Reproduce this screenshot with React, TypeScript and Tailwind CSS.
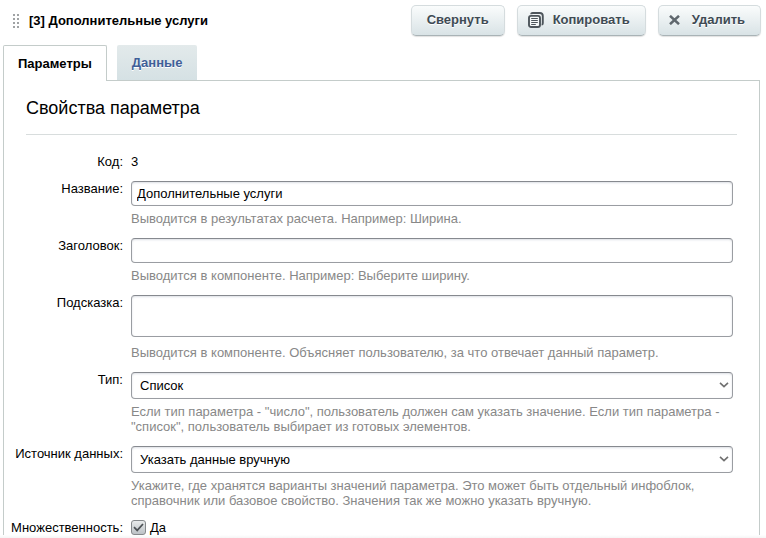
import { ReactNode, useState } from 'react';

const buttonClass =
  'flex h-[31px] cursor-pointer items-center rounded-[5px] border border-[#d5dcde] border-b-[#a9b3b6] bg-linear-to-b from-[#fafcfc] to-[#d9e3e6] pb-[2px] text-[13px] font-bold text-[#3f4b54] shadow-[0_1px_1px_rgba(0,0,0,0.12)] [text-shadow:0_1px_0_#fff]';

const fieldClass =
  'block w-full rounded-[4px] border border-[#9a9da2] border-t-[#86898f] bg-white text-[13px] text-black shadow-[inset_0_1px_2px_rgba(120,130,150,0.25)] outline-none focus:border-[#5b8fb5]';

function DragHandle() {
  return (
    <svg width="8" height="14" viewBox="0 0 8 14" fill="#a0a3a5" aria-hidden="true">
      {[0, 4, 8, 12].map((y) => (
        <g key={y}>
          <rect x="1" y={y} width="2" height="2" />
          <rect x="5" y={y} width="2" height="2" />
        </g>
      ))}
    </svg>
  );
}

function CopyIcon() {
  return (
    <svg width="16" height="16" viewBox="0 0 16 16" fill="none" aria-hidden="true">
      <path d="M3.2 2.2Q3.2 1 4.6 1H11.8Q14.8 1 14.8 4V11.2Q14.8 12.6 13.6 12.6" stroke="#4d555b" strokeWidth="1.9" />
      <rect x="1" y="3.9" width="11" height="11.1" rx="2" fill="#f4f8f8" stroke="#4d555b" strokeWidth="1.9" />
      <path d="M3.2 6.5H9.8M3.2 8.5H9.8M3.2 10.5H9.8M3.2 12.5H7.8" stroke="#4d555b" />
    </svg>
  );
}

function CrossIcon() {
  return (
    <svg width="11" height="10" viewBox="0 0 11 10" fill="none" aria-hidden="true">
      <path d="M1 0.8L10 9.2M10 0.8L1 9.2" stroke="#5f676d" strokeWidth="2.5" />
    </svg>
  );
}

type RowProps = {
  label: string;
  htmlFor?: string;
  hint?: string;
  hintClass?: string;
  children: ReactNode;
};

function Row({ label, htmlFor, hint, hintClass = 'mt-[5px]', children }: RowProps) {
  return (
    <div className="grid grid-cols-[119px_minmax(0,1fr)] gap-x-2 text-[13px] leading-[15px]">
      <div className="text-right whitespace-nowrap">
        {htmlFor ? <label htmlFor={htmlFor}>{label}</label> : label}
      </div>
      <div>
        {children}
        {hint ? <p className={`text-[#888] ${hintClass}`}>{hint}</p> : null}
      </div>
    </div>
  );
}

function SelectField({ id, options }: { id: string; options: string[] }) {
  return (
    <div className="relative">
      <select id={id} className={`${fieldClass} h-[27px] appearance-none pr-6 pl-2`}>
        {options.map((item) => (
          <option key={item}>{item}</option>
        ))}
      </select>
      <svg
        className="pointer-events-none absolute top-[10px] right-[4px]"
        width="10"
        height="6"
        viewBox="0 0 10 6"
        fill="none"
        aria-hidden="true"
      >
        <path d="M1 0.8L5 4.6L9 0.8" stroke="#707070" strokeWidth="1.6" />
      </svg>
    </div>
  );
}

export default function App() {
  const [name, setName] = useState('Дополнительные услуги');
  const [title, setTitle] = useState('');
  const [tooltip, setTooltip] = useState('');
  const [multiple, setMultiple] = useState(true);

  return (
    <main className="bg-white font-['Liberation_Sans',Arial,sans-serif] text-black">
      <header className="flex h-[45px] items-start pt-[5px] pr-[5px] pl-3">
        <div className="flex h-[31px] items-center gap-[9px]">
          <DragHandle />
          <h1 className="text-[13px] font-bold">[3] Дополнительные услуги</h1>
        </div>
        <div className="ml-auto flex gap-3">
          <button type="button" className={`${buttonClass} px-[15px]`}>
            Свернуть
          </button>
          <button type="button" className={`${buttonClass} gap-[9px] pr-[15px] pl-[10px]`}>
            <CopyIcon />
            Копировать
          </button>
          <button type="button" className={`${buttonClass} gap-3 pr-[15px] pl-[10px]`}>
            <CrossIcon />
            Удалить
          </button>
        </div>
      </header>

      <div role="tablist" className="flex gap-[10px] pl-[3px]">
        <button
          type="button"
          role="tab"
          aria-selected="true"
          className="z-10 -mb-px h-9 rounded-t-[2px] border border-b-0 border-[#c4ccca] bg-white px-[14px] text-[13px] font-bold"
        >
          Параметры
        </button>
        <button
          type="button"
          role="tab"
          aria-selected="false"
          className="h-[35px] cursor-pointer rounded-t-[2px] bg-linear-to-b from-[#e3eaeb] to-[#d5e1e4] px-[15px] text-[13px] font-bold text-[#3f5f98] [text-shadow:0_1px_0_#fff]"
        >
          Данные
        </button>
      </div>

      <section className="mr-[6px] ml-[3px] border border-b-0 border-[#c4ccca]">
        <h2 className="mx-[22px] border-b border-[#d8dddd] pt-[15px] pb-[14px] text-[18px] leading-[24px]">
          Свойства параметра
        </h2>

        <form className="mt-[19px] flex flex-col gap-3 pr-[26px]">
          <Row label="Код:">3</Row>

          <Row label="Название:" htmlFor="name" hint="Выводится в результатах расчета. Например: Ширина.">
            <input
              id="name"
              type="text"
              value={name}
              onChange={(event) => setName(event.target.value)}
              className={`${fieldClass} h-[25px] px-[5px]`}
            />
          </Row>

          <Row label="Заголовок:" htmlFor="title" hint="Выводится в компоненте. Например: Выберите ширину.">
            <input
              id="title"
              type="text"
              value={title}
              onChange={(event) => setTitle(event.target.value)}
              className={`${fieldClass} h-[25px] px-[5px]`}
            />
          </Row>

          <Row
            label="Подсказка:"
            htmlFor="tooltip"
            hint="Выводится в компоненте. Объясняет пользователю, за что отвечает данный параметр."
            hintClass="mt-2"
          >
            <textarea
              id="tooltip"
              value={tooltip}
              onChange={(event) => setTooltip(event.target.value)}
              className={`${fieldClass} h-[42px] resize-none px-[5px] py-1`}
            />
          </Row>

          <Row
            label="Тип:"
            htmlFor="type"
            hint={'Если тип параметра - "число", пользователь должен сам указать значение. Если тип параметра - "список", пользователь выбирает из готовых элементов.'}
          >
            <SelectField id="type" options={['Список', 'Число']} />
          </Row>

          <Row
            label="Источник данных:"
            htmlFor="source"
            hint="Укажите, где хранятся варианты значений параметра. Это может быть отдельный инфоблок, справочник или базовое свойство. Значения так же можно указать вручную."
          >
            <SelectField id="source" options={['Указать данные вручную', 'Инфоблок', 'Справочник']} />
          </Row>

          <Row label="Множественность:" htmlFor="multiple">
            <div className="flex items-center gap-1">
              <span className="relative size-[15px]">
                <input
                  id="multiple"
                  type="checkbox"
                  checked={multiple}
                  onChange={(event) => setMultiple(event.target.checked)}
                  className="block size-[15px] appearance-none rounded-[3px] border border-[#85898c] bg-linear-to-b from-[#e9ebec] to-[#bcc2c6]"
                />
                {multiple ? (
                  <svg
                    className="pointer-events-none absolute top-[3px] left-[2px]"
                    width="11"
                    height="9"
                    viewBox="0 0 11 9"
                    fill="none"
                    aria-hidden="true"
                  >
                    <path d="M1 4.2L4.2 7.4L10 1" stroke="#4c5155" strokeWidth="1.7" />
                  </svg>
                ) : null}
              </span>
              <label htmlFor="multiple">Да</label>
            </div>
          </Row>
        </form>
      </section>
      <div className="h-[3px] bg-linear-to-b from-white to-[#f5f5f5]" />
    </main>
  );
}
